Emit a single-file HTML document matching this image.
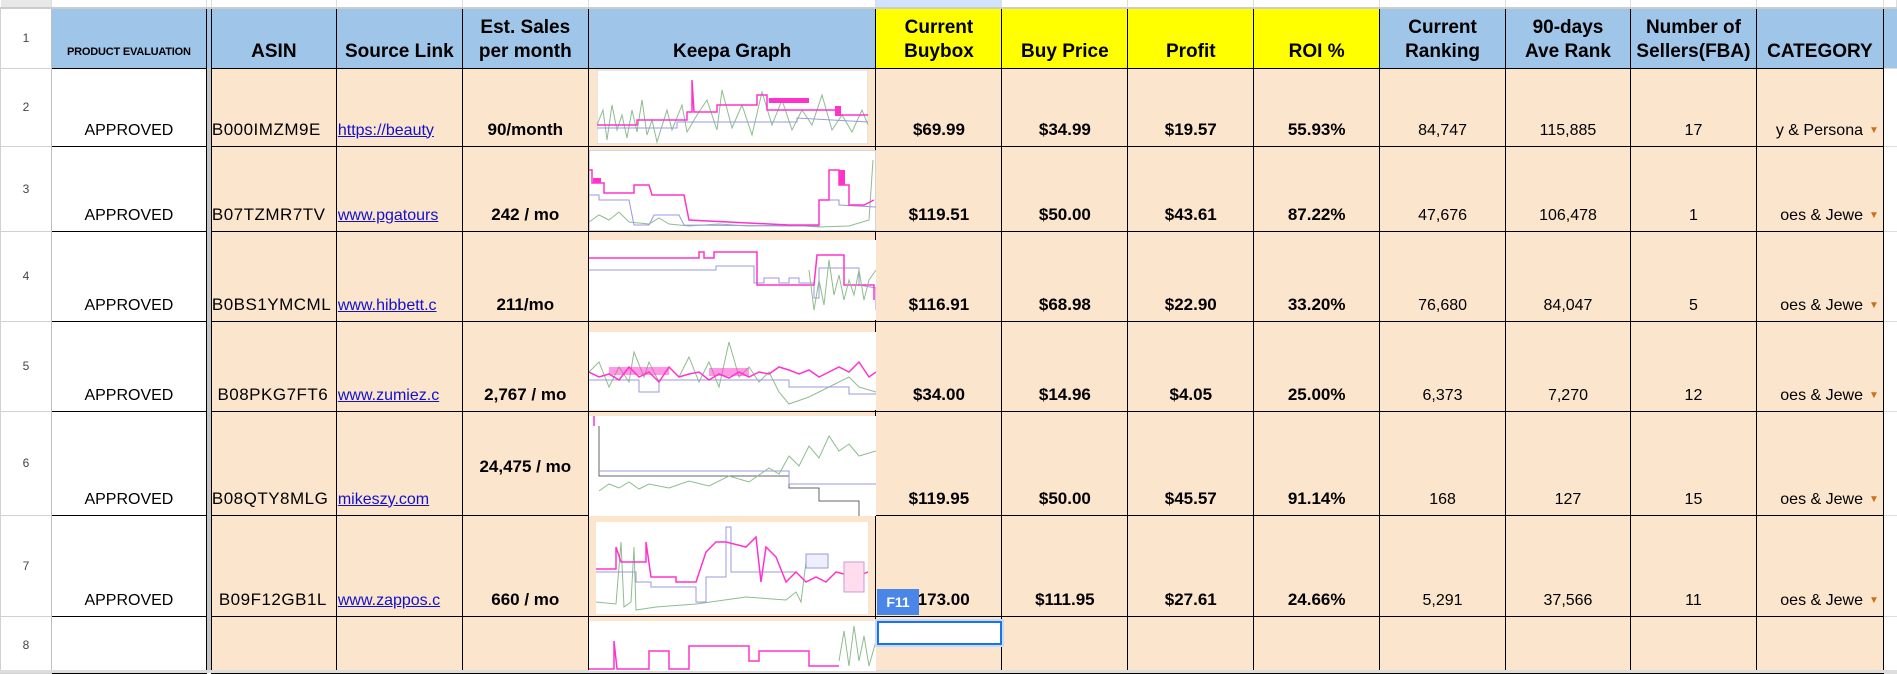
<!DOCTYPE html>
<html><head><meta charset="utf-8"><style>
*{margin:0;padding:0;box-sizing:border-box}
body{width:1897px;height:673px;overflow:hidden;background:#fff;font-family:"Liberation Sans",sans-serif;position:relative}
table{border-collapse:collapse;table-layout:fixed;position:absolute;left:0;top:0}
td{overflow:hidden;white-space:nowrap;vertical-align:bottom;text-align:center;padding:0 2px 6px 2px;font-size:17px;font-weight:bold;color:#000;border:1px solid #000}
td.rn{border:1px solid #d0d0d0;border-right:1px solid #c0c0c0;font-weight:normal;font-size:12px;color:#444;vertical-align:middle;padding:0;background:#fff}
tr.h td.rn{font-size:12px;font-weight:normal;background:#fff;padding:0}
td.sep{background:#c4c4c4;border:none;padding:0}
td.pe{background:#fff;font-weight:normal;font-size:16px;border-left:none}
tr.top td{border:none;border-right:1px solid #ddd;border-bottom:2px solid #ccc;padding:0;background:#fff}
tr.h td{background:#9fc5e8;font-size:19px;line-height:24px;padding-bottom:4px;white-space:nowrap}
tr.h td.y{background:#ffff00}
tr.h td.pe{font-size:11px;font-weight:bold;background:#9fc5e8;padding-bottom:4px;letter-spacing:-0.2px}
tr.d td.c{background:#fce5cd}
td.n{font-weight:normal;font-size:16px}
td.a{font-weight:normal;font-size:17px;text-align:left;padding-left:0;letter-spacing:0.5px}
td.l{font-weight:normal;font-size:16px;text-align:left;padding-left:1px;color:#1a0dab}
td.l span{color:#11c;text-decoration:underline}
td.cat{font-weight:normal;font-size:16px;text-align:right;padding-right:4px;position:relative}
td.cat i{font-style:normal;color:#c8701c;font-size:10px;margin-left:6px;vertical-align:2px}
td.ext{border:none;border-bottom:1px solid #ddd;background:#fff}
.g{position:absolute;background:#fff}
</style></head><body>
<table>
<colgroup><col style="width:51px"><col style="width:155px"><col style="width:5px"><col style="width:125px"><col style="width:126px"><col style="width:126px"><col style="width:288px"><col style="width:126px"><col style="width:126px"><col style="width:126px"><col style="width:126px"><col style="width:126px"><col style="width:125px"><col style="width:126px"><col style="width:127px"><col style="width:13px"></colgroup>
<tr class="top" style="height:8px"><td class="rn" style="background:#e8e8e8"></td><td></td><td class="sep"></td><td></td><td></td><td></td><td></td><td style="background:#d3e3fd"></td><td></td><td></td><td></td><td></td><td></td><td></td><td></td><td></td></tr>
<tr class="h" style="height:60px"><td class="rn">1</td><td class="pe">PRODUCT EVALUATION</td><td class="sep"></td><td>ASIN</td><td>Source Link</td><td>Est. Sales<br>per month</td><td>Keepa Graph</td><td class="y">Current<br>Buybox</td><td class="y">Buy Price</td><td class="y">Profit</td><td class="y">ROI %</td><td>Current<br>Ranking</td><td>90-days<br>Ave Rank</td><td>Number of<br>Sellers(FBA)</td><td>CATEGORY</td><td class="ext"></td></tr>
<tr class="d" style="height:78px"><td class="rn">2</td><td class="pe">APPROVED</td><td class="sep"></td><td class="c a">B000IMZM9E</td><td class="c l"><span>https://beauty</span></td><td class="c">90/month</td><td class="c"></td><td class="c">$69.99</td><td class="c">$34.99</td><td class="c">$19.57</td><td class="c">55.93%</td><td class="c n">84,747</td><td class="c n">115,885</td><td class="c n">17</td><td class="c cat">y &amp; Persona<i>▼</i></td><td class="ext"></td></tr>
<tr class="d" style="height:85px"><td class="rn">3</td><td class="pe">APPROVED</td><td class="sep"></td><td class="c a">B07TZMR7TV</td><td class="c l"><span>www.pgatours</span></td><td class="c">242 / mo</td><td class="c"></td><td class="c">$119.51</td><td class="c">$50.00</td><td class="c">$43.61</td><td class="c">87.22%</td><td class="c n">47,676</td><td class="c n">106,478</td><td class="c n">1</td><td class="c cat">oes &amp; Jewe<i>▼</i></td><td class="ext"></td></tr>
<tr class="d" style="height:90px"><td class="rn">4</td><td class="pe">APPROVED</td><td class="sep"></td><td class="c a">B0BS1YMCML</td><td class="c l"><span>www.hibbett.c</span></td><td class="c">211/mo</td><td class="c"></td><td class="c">$116.91</td><td class="c">$68.98</td><td class="c">$22.90</td><td class="c">33.20%</td><td class="c n">76,680</td><td class="c n">84,047</td><td class="c n">5</td><td class="c cat">oes &amp; Jewe<i>▼</i></td><td class="ext"></td></tr>
<tr class="d" style="height:90px"><td class="rn">5</td><td class="pe">APPROVED</td><td class="sep"></td><td class="c a" style="text-align:center">B08PKG7FT6</td><td class="c l"><span>www.zumiez.c</span></td><td class="c">2,767 / mo</td><td class="c"></td><td class="c">$34.00</td><td class="c">$14.96</td><td class="c">$4.05</td><td class="c">25.00%</td><td class="c n">6,373</td><td class="c n">7,270</td><td class="c n">12</td><td class="c cat">oes &amp; Jewe<i>▼</i></td><td class="ext"></td></tr>
<tr class="d" style="height:104px"><td class="rn">6</td><td class="pe">APPROVED</td><td class="sep"></td><td class="c a">B08QTY8MLG</td><td class="c l"><span>mikeszy.com</span></td><td class="c" style="padding-bottom:38px">24,475 / mo</td><td class="c"></td><td class="c">$119.95</td><td class="c">$50.00</td><td class="c">$45.57</td><td class="c">91.14%</td><td class="c n">168</td><td class="c n">127</td><td class="c n">15</td><td class="c cat">oes &amp; Jewe<i>▼</i></td><td class="ext"></td></tr>
<tr class="d" style="height:101px"><td class="rn">7</td><td class="pe">APPROVED</td><td class="sep"></td><td class="c a" style="text-align:center">B09F12GB1L</td><td class="c l"><span>www.zappos.c</span></td><td class="c">660 / mo</td><td class="c"></td><td class="c">$173.00</td><td class="c">$111.95</td><td class="c">$27.61</td><td class="c">24.66%</td><td class="c n">5,291</td><td class="c n">37,566</td><td class="c n">11</td><td class="c cat">oes &amp; Jewe<i>▼</i></td><td class="ext"></td></tr>
<tr class="d" style="height:57px"><td class="rn">8</td><td class="pe"></td><td class="sep"></td><td class="c"></td><td class="c"></td><td class="c"></td><td class="c"></td><td class="c"></td><td class="c"></td><td class="c"></td><td class="c"></td><td class="c"></td><td class="c"></td><td class="c"></td><td class="c"></td><td class="ext"></td></tr>
</table>
<div style="position:absolute;left:0;top:670px;width:1897px;height:3px;background:#ddd"></div>

<svg class="g" style="left:597px;top:70px" width="271" height="74" viewBox="0 0 271 74"><rect width="271" height="74" fill="#fff" stroke="#ccc"/>
<polyline fill="none" stroke="#8fbc8f" stroke-width="1" points="0,55 6,40 10,70 15,35 20,60 25,45 30,68 35,40 40,62 45,30 50,65 55,50 60,72 70,40 75,60 85,35 90,62 100,45 110,30 120,60 125,20 135,58 145,35 155,65 165,22 175,55 185,30 195,60 205,40 215,55 225,25 235,60 245,45 255,62 265,40 271,55"/>
<polyline fill="none" stroke="#9999dd" stroke-width="1" points="0,58 80,58 80,52 200,52 200,48 271,52"/>
<polyline fill="none" stroke="#ff33cc" stroke-width="1.5" points="0,55 40,55 40,50 90,50 90,42 95,42 95,10 97,42 120,42 120,35 160,35 160,25 170,25 170,40 240,40 240,45 271,45"/>
<rect x="172" y="28" width="40" height="5" fill="#ff33cc"/><rect x="238" y="36" width="6" height="10" fill="#ff33cc"/></svg>

<svg class="g" style="left:589px;top:150px" width="287" height="81" viewBox="0 0 287 81"><rect width="287" height="81" fill="#fff" stroke="#aaa"/>
<polyline fill="none" stroke="#8fbc8f" points="0,72 10,65 20,70 30,62 40,72 60,74 70,68 80,74 100,76 130,74 160,76 200,75 230,77 260,76 280,70 284,10"/>
<polyline fill="none" stroke="#9999dd" points="0,45 10,45 10,50 40,50 45,75 60,75 65,65 90,65 95,75 200,76 230,76 230,50 250,50 250,55 287,57"/>
<polyline fill="none" stroke="#ff33cc" stroke-width="1.5" points="0,20 3,20 3,33 15,33 15,43 45,43 45,35 60,35 63,45 95,45 100,70 200,75 230,75 230,50 240,50 240,20 250,20 250,35 260,35 260,55 275,55 285,50"/>
<rect x="4" y="28" width="8" height="5" fill="#ff33cc"/><rect x="250" y="20" width="6" height="15" fill="#ff33cc"/></svg>

<svg class="g" style="left:589px;top:240px" width="287" height="80" viewBox="0 0 287 80"><rect width="287" height="80" fill="#fff"/>
<polyline fill="none" stroke="#9999dd" points="0,30 127,30 127,26 165,26 165,43 175,43 175,38 190,38 190,43 200,43 200,38 210,38 210,43 225,43 225,58 230,58 230,28 270,28 270,45 287,48 287,70"/>
<polyline fill="none" stroke="#ff33cc" stroke-width="1.5" points="0,18 110,18 110,12 115,12 115,18 125,18 125,12 168,12 168,45 225,45 228,15 255,15 255,45 285,45 285,60"/>
<polyline fill="none" stroke="#8fbc8f" points="220,30 225,70 230,40 235,65 240,20 245,55 250,35 255,60 260,40 265,55 270,30 275,60 280,40 287,30"/></svg>

<svg class="g" style="left:589px;top:332px" width="287" height="78" viewBox="0 0 287 78"><rect width="287" height="78" fill="#fff"/>
<polyline fill="none" stroke="#8fbc8f" points="0,40 10,30 20,55 30,35 40,50 45,20 55,45 60,30 70,50 80,35 90,45 100,25 110,50 120,30 130,55 140,10 150,45 160,35 170,50 180,40 190,60 200,72 220,65 240,55 260,45 270,55 287,60"/>
<polyline fill="none" stroke="#9999dd" points="0,48 50,48 50,60 70,60 70,48 200,48 200,55 260,55 260,62 287,62"/>
<polyline fill="none" stroke="#ff33cc" stroke-width="1.5" points="0,40 10,45 20,42 30,48 40,35 50,45 60,40 70,50 80,35 90,45 100,42 110,40 120,48 130,42 140,46 150,40 160,45 170,40 180,42 190,35 200,38 210,42 220,38 230,45 240,40 250,35 260,40 270,30 280,45 287,40"/>
<rect x="20" y="35" width="60" height="8" fill="#ff33cc" opacity=".5"/><rect x="120" y="36" width="40" height="8" fill="#ff33cc" opacity=".5"/></svg>

<svg class="g" style="left:589px;top:416px" width="287" height="100" viewBox="0 0 287 100"><rect width="287" height="100" fill="#fff"/>
<polyline fill="none" stroke="#ff33cc" stroke-width="1.5" points="5,0 5,10"/>
<polyline fill="none" stroke="#666" points="10,10 10,60 200,60 200,72 230,72 230,85 270,85 270,100"/>
<polyline fill="none" stroke="#9999dd" points="10,55 200,55 200,68 287,68"/>
<polyline fill="none" stroke="#8fbc8f" points="10,75 20,68 30,72 40,66 50,73 60,68 80,72 100,65 120,70 140,60 160,66 180,52 190,58 200,40 210,50 220,30 230,42 240,20 250,35 260,28 270,40 287,35"/></svg>

<svg class="g" style="left:596px;top:522px" width="272" height="92" viewBox="0 0 272 92"><rect width="272" height="92" fill="#fff"/>
<polyline fill="none" stroke="#8fbc8f" points="0,80 20,82 25,20 28,85 35,80 38,25 40,88 60,85 100,82 150,75 190,78 200,70 205,80 210,40 230,45"/>
<polyline fill="none" stroke="#9999dd" points="0,50 40,50 40,60 55,60 55,65 100,65 100,80 110,80 110,55 130,55 130,5 135,5 135,50 200,50"/>
<polyline fill="none" stroke="#ff33cc" stroke-width="1.5" points="0,47 20,47 20,25 25,40 40,40 50,40 50,20 55,55 80,55 80,60 100,60 110,30 120,20 130,20 150,25 160,15 165,60 170,25 180,35 190,60 200,50 210,60 220,55 230,60 240,50 260,55 272,50"/>
<rect x="210" y="32" width="22" height="14" fill="#eef" stroke="#99c"/><rect x="248" y="40" width="20" height="30" fill="#fde" stroke="#c9c"/></svg>

<svg class="g" style="left:589px;top:621px" width="287" height="50" viewBox="0 0 287 50"><rect width="287" height="50" fill="#fff"/>
<polyline fill="none" stroke="#ff33cc" stroke-width="1.5" points="0,48 20,48 25,48 25,20 28,48 60,48 60,30 80,30 80,48 100,48 100,25 160,25 160,40 170,40 170,30 220,30 220,45 250,45"/>
<polyline fill="none" stroke="#8fbc8f" points="250,40 255,10 260,45 265,5 270,40 275,15 280,45 287,20"/></svg>

<div style="position:absolute;left:877px;top:621px;width:125px;height:24px;border:2px solid #1a73e8;background:#fff;box-shadow:0 0 0 2px #c6dafc"></div>
<div style="position:absolute;left:877px;top:589px;width:42px;height:26px;background:#4a86e8;color:#fff;font:bold 14px 'Liberation Sans',sans-serif;line-height:26px;text-align:center">F11</div>
</body></html>
